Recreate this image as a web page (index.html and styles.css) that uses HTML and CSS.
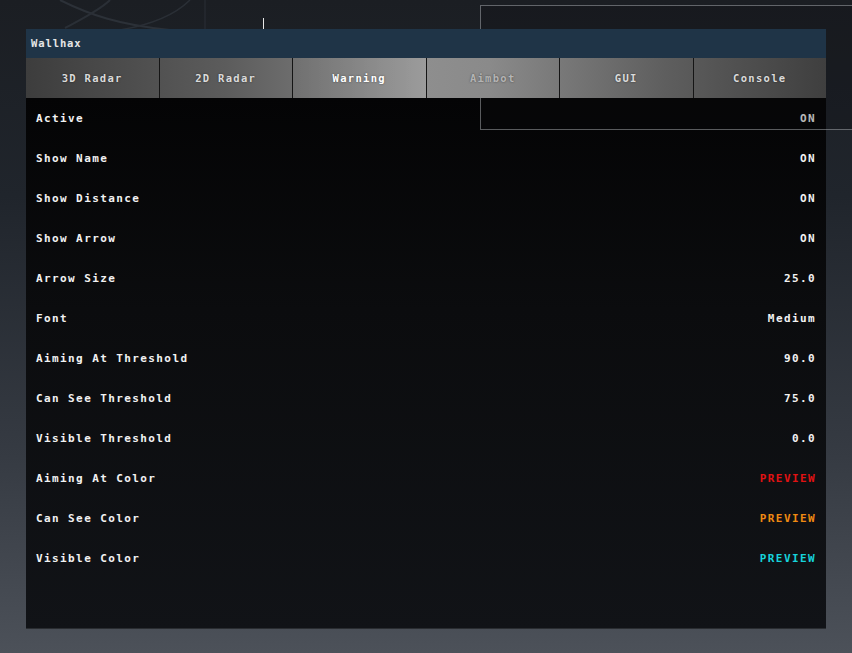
FILE: index.html
```html
<!DOCTYPE html>
<html lang="en">
<head>
    <meta charset="UTF-8">
    <title>Wallhax</title>
    <link rel="stylesheet" href="styles.css">
</head>
<body>

<svg class="bg-lines" width="320" height="40" viewBox="0 0 320 40">
    <path d="M60 0 C 90 15, 120 25, 170 30" stroke="#2c3138" stroke-width="2" fill="none"/>
    <path d="M110 0 C 100 10, 80 20, 65 28" stroke="#2a2f36" stroke-width="2" fill="none"/>
    <path d="M190 0 C 175 15, 150 25, 120 30" stroke="#2a2f36" stroke-width="1.5" fill="none"/>
    <path d="M205 0 L 205 30" stroke="#2a2f36" stroke-width="1" fill="none"/>
</svg>
<div class="cursor"></div>
<div class="overlay-box"></div>

<div class="panel">
    <div class="title-bar">Wallhax</div>

    <!-- Abas -->
    <div class="tabs">
        <div class="tab">3D Radar</div>
        <div class="tab">2D Radar</div>
        <div class="tab active">Warning</div>
        <div class="tab dim">Aimbot</div>
        <div class="tab">GUI</div>
        <div class="tab">Console</div>
    </div>

    <!-- Opções -->
    <div class="options">
        <div class="row"><span>Active</span><span>ON</span></div>
        <div class="row"><span>Show Name</span><span>ON</span></div>
        <div class="row"><span>Show Distance</span><span>ON</span></div>
        <div class="row"><span>Show Arrow</span><span>ON</span></div>
        <div class="row"><span>Arrow Size</span><span>25.0</span></div>
        <div class="row"><span>Font</span><span>Medium</span></div>
        <div class="row"><span>Aiming At Threshold</span><span>90.0</span></div>
        <div class="row"><span>Can See Threshold</span><span>75.0</span></div>
        <div class="row"><span>Visible Threshold</span><span>0.0</span></div>
        <div class="row"><span>Aiming At Color</span><span class="preview red">PREVIEW</span></div>
        <div class="row"><span>Can See Color</span><span class="preview orange">PREVIEW</span></div>
        <div class="row"><span>Visible Color</span><span class="preview cyan">PREVIEW</span></div>
    </div>
</div>

</body>
</html>
```

FILE: styles.css
```css
html, body {
    height: 100%;
}
body {
    margin: 0;
    background: linear-gradient(180deg, #1b1e23 0%, #20252c 30%, #363b43 70%, #4c5159 100%);
    font-family: "DejaVu Sans Mono", "Liberation Mono", monospace;
    font-weight: bold;
    font-size: 11px;
    letter-spacing: 1.4px;
    color: #f2f2f2;
    padding: 29px 26px 0 26px;
    box-sizing: border-box;
    overflow: hidden;
}
.bg-lines {
    position: absolute;
    left: 0;
    top: 0;
}
.cursor {
    position: absolute;
    left: 263px;
    top: 18px;
    width: 1px;
    height: 12px;
    background: #e8e8e8;
}
.overlay-box {
    position: absolute;
    left: 480px;
    top: 5px;
    width: 380px;
    height: 123px;
    border: 1px solid rgba(190, 195, 200, 0.45);
    background: rgba(10, 12, 14, 0.25);
    z-index: 1;
}
.panel {
    width: 800px;
    height: 599px;
    display: flex;
    flex-direction: column;
}
.title-bar {
    position: relative;
    z-index: 2;
    height: 29px;
    line-height: 29px;
    padding-left: 5px;
    background: #1f3447;
    color: #e6e6e6;
    font-size: 10.5px;
    letter-spacing: 0.9px;
}
.tabs {
    position: relative;
    z-index: 2;
    height: 40px;
    display: flex;
    background: linear-gradient(90deg, #3d3d3d 0%, #5c5c5c 25%, #8e8e8e 50%, #8a8a8a 58%, #5e5e5e 80%, #3f3f3f 100%);
}
.tab {
    flex: 1;
    display: flex;
    align-items: center;
    justify-content: center;
    border-left: 1px solid #151515;
    color: #dadada;
    font-size: 10.5px;
    letter-spacing: 1.3px;
    text-shadow: 0 0 2px rgba(0, 0, 0, 0.5);
}
.tab:first-child {
    border-left: none;
}
.tab.active {
    color: #ffffff;
    background: linear-gradient(90deg, rgba(255,255,255,0.02), rgba(255,255,255,0.12));
}
.tab.dim {
    color: #b4b4b4;
}
.options {
    flex: 1;
    padding: 0 10px 0 10px;
    background: linear-gradient(180deg, #040405 0%, #0b0c0e 40%, #111317 100%);
    box-shadow: 0 1px 0 #2a2d31;
}
.row {
    height: 40px;
    display: flex;
    align-items: center;
    justify-content: space-between;
}
.preview {
    font-size: 11px;
}
.red {
    color: #e11212;
}
.orange {
    color: #f08a12;
}
.cyan {
    color: #16d3dc;
}
```
